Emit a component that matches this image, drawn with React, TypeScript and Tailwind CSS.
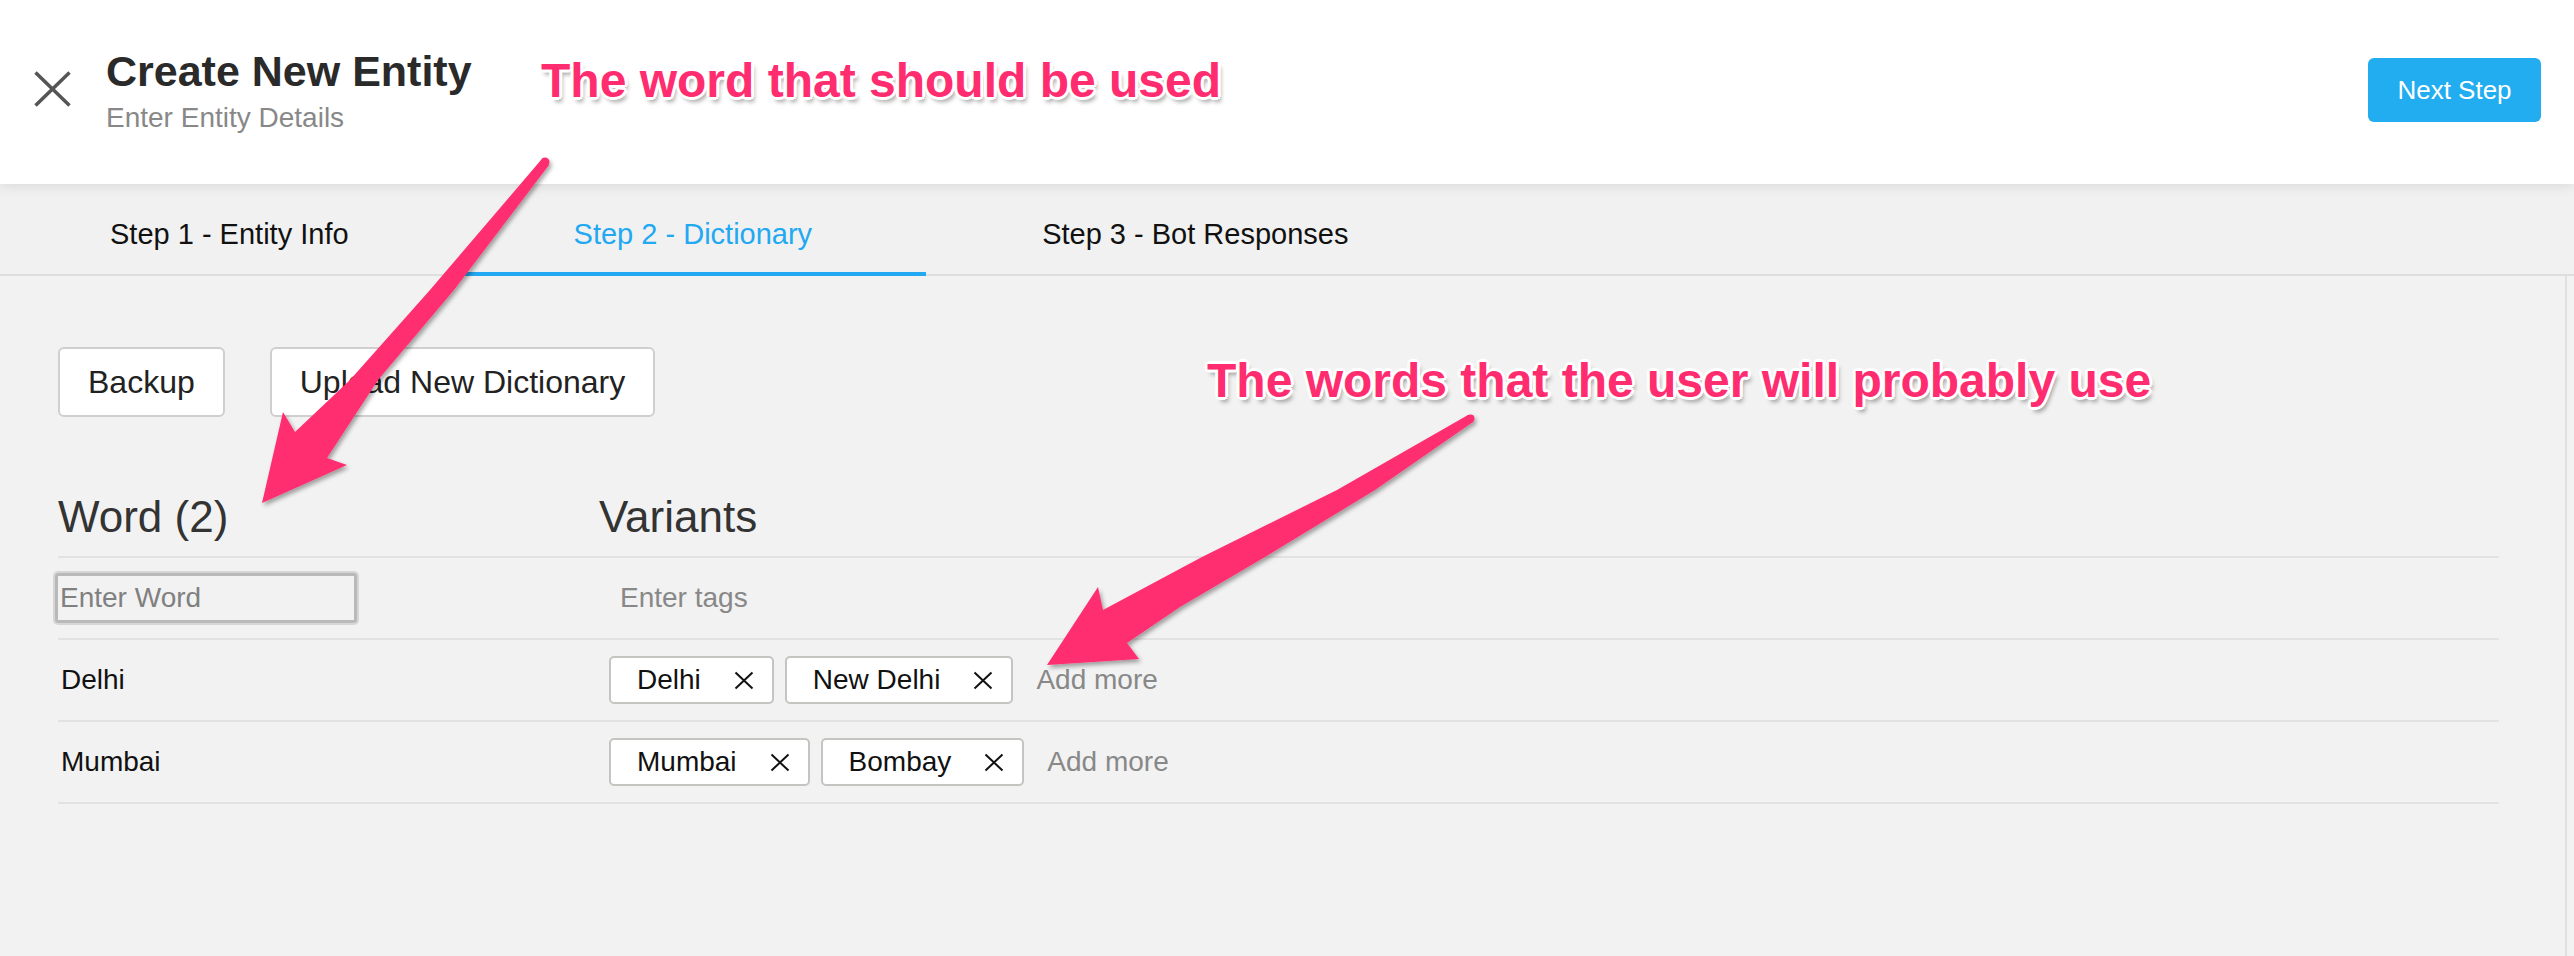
import React from "react";

const XIcon: React.FC<{ w: number; h: number; color: string; stroke: number; className?: string }> = ({ w, h, color, stroke, className }) => (
  <svg className={className} width={w} height={h} viewBox={`0 0 ${w} ${h}`} fill="none">
    <path d={`M1.5 1.5 L${w - 1.5} ${h - 1.5} M${w - 1.5} 1.5 L1.5 ${h - 1.5}`} stroke={color} strokeWidth={stroke} />
  </svg>
);

const Tag: React.FC<{ label: string }> = ({ label }) => (
  <div className="flex h-[48px] items-center rounded-[5px] border-2 border-[#c4c4c0] bg-white pl-[26px] pr-[18px]">
    <span className="leading-none text-[#111]">{label}</span>
    <XIcon className="ml-[33px]" w={20} h={19} color="#111" stroke={2} />
  </div>
);

const rows = [
  { word: "Delhi", tags: ["Delhi", "New Delhi"] },
  { word: "Mumbai", tags: ["Mumbai", "Bombay"] },
];

const noteText =
  "absolute z-20 whitespace-nowrap text-[48px] leading-[48px] font-bold text-[#ff2d6f] [text-shadow:3px_0_0_#fff,-3px_0_0_#fff,0_3px_0_#fff,0_-3px_0_#fff,2px_2px_0_#fff,-2px_2px_0_#fff,2px_-2px_0_#fff,-2px_-2px_0_#fff,3px_5px_4px_rgba(0,0,0,0.35)]";

const App: React.FC = () => {
  return (
    <div className="relative h-[956px] w-full overflow-hidden bg-[#f2f2f2] font-['Liberation_Sans',Arial,sans-serif]">
      {/* Header */}
      <header className="relative z-10 flex h-[184px] items-start justify-between bg-white pl-[34px] pr-[33px] pt-[50px] shadow-[0_3px_12px_rgba(0,0,0,0.09)]">
        <div className="flex items-start">
          <XIcon className="mt-[21px]" w={37} h={36} color="#555" stroke={3.5} />
          <div className="ml-[35px] flex flex-col">
            <span className="text-[43px] leading-[42px] font-bold text-[#2a2a2a]">Create New Entity</span>
            <span className="mt-[12px] text-[28px] leading-[28px] text-[#888]">Enter Entity Details</span>
          </div>
        </div>
        <button className="mt-[8px] h-[64px] w-[173px] rounded-[6px] bg-[#22adf0] text-[26px] text-white">Next Step</button>
      </header>

      {/* Steps */}
      <nav className="flex h-[92px] border-b-2 border-[#dedede] bg-[#f1f1f1] text-[29px]">
        <div className="-mb-[2px] flex h-[92px] items-center border-b-4 border-transparent pl-[110px] pr-[111px] pt-[14px] text-[#111]">
          Step 1 - Entity Info
        </div>
        <div className="-mb-[2px] flex h-[92px] items-center border-b-4 border-[#22a9f1] px-[114px] pt-[14px] text-[#22a9f1]">
          Step 2 - Dictionary
        </div>
        <div className="-mb-[2px] flex h-[92px] items-center border-b-4 border-transparent px-[116px] pt-[14px] text-[#111]">
          Step 3 - Bot Responses
        </div>
      </nav>

      {/* Content */}
      <div className="flex h-[680px]">
        <main className="flex-1 pl-[58px] pr-[66px] text-[28px]">
          <div className="mt-[71px] flex gap-[45px] text-[32px] text-[#222]">
            <button className="h-[70px] rounded-[6px] border-2 border-[#cfcfcf] bg-white px-[28px]">Backup</button>
            <button className="h-[70px] rounded-[6px] border-2 border-[#cfcfcf] bg-white px-[28px]">Upload New Dictionary</button>
          </div>

          <div className="mt-[78px] flex border-b-2 border-[#e2e2e2] pb-[17px] text-[44px] leading-[44px] text-[#333]">
            <div className="w-[541px]">Word (2)</div>
            <div>Variants</div>
          </div>

          <div className="flex h-[82px] items-center border-b-2 border-[#e2e2e2]">
            <div className="w-[541px]">
              <input
                placeholder="Enter Word"
                className="-ml-[3px] h-[50px] w-[302px] rounded-[3px] border-[3px] border-[#b9b9b9] bg-transparent pl-[2px] text-[#111] shadow-[0_0_0_2px_#d6d6d6] outline-none placeholder:text-[#808080]"
              />
            </div>
            <input
              placeholder="Enter tags"
              className="bg-transparent pl-[21px] text-[#111] outline-none placeholder:text-[#888]"
            />
          </div>

          {rows.map((r) => (
            <div key={r.word} className="flex h-[82px] items-center border-b-2 border-[#e2e2e2]">
              <div className="w-[541px] pl-[3px] text-[#111]">{r.word}</div>
              <div className="flex items-center gap-[11px] pl-[10px]">
                {r.tags.map((t) => (
                  <Tag key={t} label={t} />
                ))}
                <span className="ml-[12px] text-[#888]">Add more</span>
              </div>
            </div>
          ))}
        </main>
        <div className="w-[9px] border-l-2 border-[#e0e0e0]" />
      </div>

      {/* Annotations */}
      <div className={`${noteText} left-[541px] top-[57px]`}>The word that should be used</div>
      <div className={`${noteText} left-[1207px] top-[357px]`}>The words that the user will probably use</div>

      <svg className="pointer-events-none absolute left-0 top-0 z-20" width="2574" height="956" viewBox="0 0 2574 956">
        <defs>
          <filter id="arrowShadow" x="-10%" y="-10%" width="130%" height="130%">
            <feDropShadow dx="2" dy="3" stdDeviation="2" floodColor="#000" floodOpacity="0.35" />
          </filter>
        </defs>
        <g fill="#ff2d6f" filter="url(#arrowShadow)">
          <polygon points="541,160 430,290 350,380 295,432 283,412 262,503 347,465 327,458 378,380 454,290 549,165" />
          <circle cx="545" cy="162" r="4.5" />
          <polygon points="1468,415 1337,490 1202,557 1103,610 1098,587 1047,665 1139,659 1127,643 1180,607 1265,557 1375,490 1473,422" />
          <circle cx="1470.5" cy="418.5" r="4" />
        </g>
      </svg>
    </div>
  );
};

export default App;
